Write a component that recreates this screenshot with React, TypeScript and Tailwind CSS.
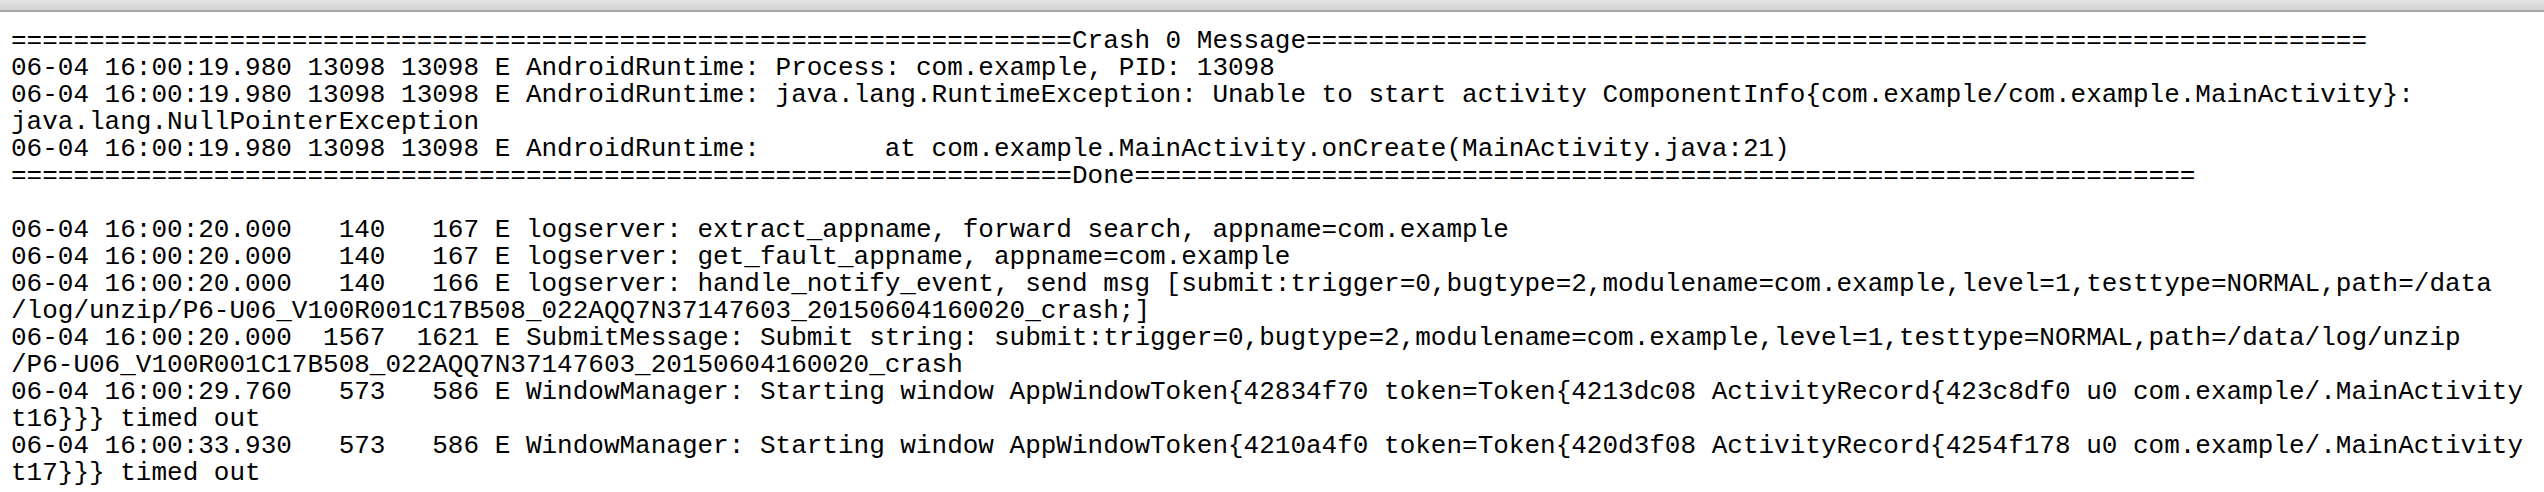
import React from "react";

const eq = "=".repeat(68);

const lines: string[] = [
  `${eq}Crash 0 Message${eq}`,
  "06-04 16:00:19.980 13098 13098 E AndroidRuntime: Process: com.example, PID: 13098",
  "06-04 16:00:19.980 13098 13098 E AndroidRuntime: java.lang.RuntimeException: Unable to start activity ComponentInfo{com.example/com.example.MainActivity}:",
  "java.lang.NullPointerException",
  "06-04 16:00:19.980 13098 13098 E AndroidRuntime:        at com.example.MainActivity.onCreate(MainActivity.java:21)",
  `${eq}Done${eq}`,
  "",
  "06-04 16:00:20.000   140   167 E logserver: extract_appname, forward search, appname=com.example",
  "06-04 16:00:20.000   140   167 E logserver: get_fault_appname, appname=com.example",
  "06-04 16:00:20.000   140   166 E logserver: handle_notify_event, send msg [submit:trigger=0,bugtype=2,modulename=com.example,level=1,testtype=NORMAL,path=/data",
  "/log/unzip/P6-U06_V100R001C17B508_022AQQ7N37147603_20150604160020_crash;]",
  "06-04 16:00:20.000  1567  1621 E SubmitMessage: Submit string: submit:trigger=0,bugtype=2,modulename=com.example,level=1,testtype=NORMAL,path=/data/log/unzip",
  "/P6-U06_V100R001C17B508_022AQQ7N37147603_20150604160020_crash",
  "06-04 16:00:29.760   573   586 E WindowManager: Starting window AppWindowToken{42834f70 token=Token{4213dc08 ActivityRecord{423c8df0 u0 com.example/.MainActivity",
  "t16}}} timed out",
  "06-04 16:00:33.930   573   586 E WindowManager: Starting window AppWindowToken{4210a4f0 token=Token{420d3f08 ActivityRecord{4254f178 u0 com.example/.MainActivity",
  "t17}}} timed out",
];

export default function App() {
  return (
    <div className="w-[2544px] h-[492px] bg-white overflow-hidden flex flex-col">
      <div className="h-[10px] shrink-0 bg-gradient-to-b from-[#e4e4e4] to-[#d2d2d2] border-b-2 border-[#a6a6a6] box-content" />
      <div className="pt-[16px] pl-[11px] font-['Liberation_Mono','Courier_New',monospace] text-[26px] leading-[27px] text-black">
        {lines.map((l, i) => (
          <div key={i} className="whitespace-pre h-[27px]">
            {l}
          </div>
        ))}
      </div>
    </div>
  );
}
